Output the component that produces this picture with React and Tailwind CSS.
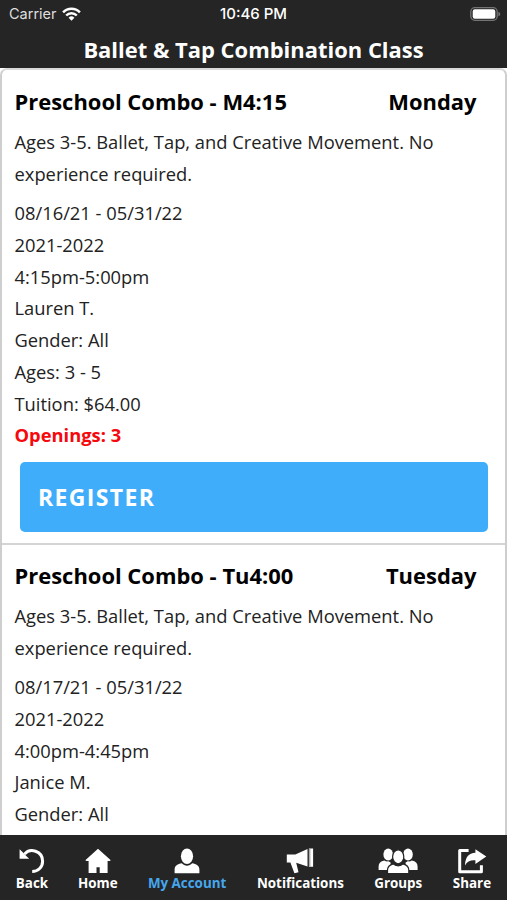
const classes = [
  {
    name: "Preschool Combo - M4:15",
    day: "Monday",
    details: ["08/16/21 - 05/31/22", "2021-2022", "4:15pm-5:00pm", "Lauren T.", "Gender: All", "Ages: 3 - 5", "Tuition: $64.00"],
    openings: 3,
  },
  {
    name: "Preschool Combo - Tu4:00",
    day: "Tuesday",
    details: ["08/17/21 - 05/31/22", "2021-2022", "4:00pm-4:45pm", "Janice M.", "Gender: All"],
  },
];

function Wifi() {
  return (
    <svg className="ml-[5px] h-[14px] w-[19px]" viewBox="0 0 19 14" fill="none" stroke="#fff" strokeWidth="2.5">
      <path d="M1.1 5.3a11.8 11.8 0 0 1 16.8 0" />
      <path d="M4.2 8.5a7.4 7.4 0 0 1 10.6 0" />
      <path d="M9.5 13.7 6.6 10.8a4.1 4.1 0 0 1 5.8 0Z" fill="#fff" stroke="none" />
    </svg>
  );
}

function Battery() {
  return (
    <svg className="h-[14px] w-[31px]" viewBox="0 0 31 14" fill="none">
      <rect x=".8" y=".7" width="26.4" height="12.6" rx="4" stroke="#747474" strokeWidth="1.3" />
      <rect x="2.7" y="2.3" width="22.6" height="9.4" rx="2.2" fill="#fff" />
      <path d="M28.4 4.7c2.4.8 2.4 3.8 0 4.6Z" fill="#747474" />
    </svg>
  );
}

function Back() {
  return (
    <svg className="h-[26px] w-[26px]" viewBox="0 0 26 26">
      <path d="M5.5 6.2C10.8-.6 23.6 2.8 23.6 13.2c0 5.8-4.3 10.2-10.4 10.3" fill="none" stroke="#fff" strokeWidth="3" />
      <path d="M.6 1.2v9.5h9.6L7.3 7.9 3.5 4.1Z" fill="#fff" />
    </svg>
  );
}

function Home() {
  return (
    <svg className="h-[26px] w-[26px]" viewBox="0 0 26 26" fill="#fff">
      <path d="M13 .8.3 12.2l1.3.9h2v12h7.9v-5.8h3.2v5.8h7.9v-12h2l1.2-.9Z" />
    </svg>
  );
}

function Account() {
  return (
    <svg className="h-[26px] w-[26px]" viewBox="0 0 26 26" fill="#fff">
      <ellipse cx="13" cy="8.3" rx="6.1" ry="7.7" />
      <path d="M7.8 15.3C3.8 16.1.6 17.7.6 21.8v3.4h24.8v-3.4c0-4.1-3.2-5.7-7.2-6.5-2.7 3.1-7.7 3.1-10.4 0Z" />
    </svg>
  );
}

function Megaphone() {
  return (
    <svg className="h-[26px] w-[28px]" viewBox="0 0 28 26" fill="#fff">
      <path d="M.8 6.4h8.5L21.5 1v17.5l-11.3-3.7 2.3 9.4-4.1 1-4-10.7H.8Z" />
      <path d="M22.9.6h4.2v18.2h-4.2Z" />
      <path d="M23.8 1v17.4" stroke="#555" strokeWidth=".7" />
    </svg>
  );
}

function Groups() {
  return (
    <svg className="h-[26px] w-[40px]" viewBox="0 0 40 26" fill="#fff">
      <ellipse cx="10.2" cy="6.6" rx="4.8" ry="6" />
      <ellipse cx="30" cy="6.6" rx="4.8" ry="6" />
      <path d="M6.3 12.5C2.6 13.4.6 15.2.6 18.4V22h12v-7.5l-2.2-1.2c-1.4.3-2.8 0-4.1-.8Z" />
      <path d="M33.9 12.5c3.7.9 5.7 2.7 5.7 5.9V22h-12v-7.5l2.2-1.2c1.4.3 2.8 0 4.1-.8Z" />
      <g stroke="#252525" strokeWidth="1.2">
        <ellipse cx="20.2" cy="8.8" rx="5.6" ry="7" />
        <path d="M15.2 15.9c-3.5 1-5.7 2.4-5.7 6.1v3.7h21.3V22c0-3.7-2.2-5.1-5.7-6.1-2.7 2.5-7.2 2.5-9.9 0Z" />
      </g>
    </svg>
  );
}

function Share() {
  return (
    <svg className="h-[26px] w-[30px]" viewBox="0 0 30 26">
      <path d="M11.6 2.5H2.7v21.3h21.7v-6.6" fill="none" stroke="#fff" strokeWidth="3" strokeLinejoin="round" />
      <path d="M18.4 1.2v3.6C11.7 5.1 8.3 9.2 8 17.5c2.2-4.2 5.5-5.6 10.4-5.2v3.8l10.9-7.6Z" fill="#fff" />
    </svg>
  );
}

const tabs = [
  { label: "Back", Icon: Back, width: "w-[32px]" },
  { label: "Home", Icon: Home, width: "w-[39px]" },
  { label: "My Account", Icon: Account, width: "w-[79px]", active: true },
  { label: "Notifications", Icon: Megaphone, width: "w-[87px]" },
  { label: "Groups", Icon: Groups, width: "w-[48px]" },
  { label: "Share", Icon: Share, width: "w-[39px]" },
];

function ClassItem({ item }) {
  return (
    <article className="shrink-0 border-b-2 border-[#d4d4d4] px-[12.5px] pt-[16px] pb-[11px] text-[18.33px] leading-[31.75px] text-[#222] first:pt-[17px]">
      <div className="flex justify-between pr-[16px] text-[21.95px] leading-[30px] font-bold text-black">
        <h2>{item.name}</h2>
        <span>{item.day}</span>
      </div>
      <p className="mt-[9px] whitespace-nowrap">
        Ages 3-5. Ballet, Tap, and Creative Movement. No
        <br />
        experience required.
      </p>
      <ul className="mt-[7.5px] whitespace-nowrap">
        {item.details.map((line) => (
          <li key={line}>{line}</li>
        ))}
      </ul>
      {item.openings && (
        <>
          <p className="font-bold text-[#f5090d]">Openings: {item.openings}</p>
          <button className="mt-[11px] ml-[5.5px] block h-[70px] w-[468px] rounded-[5px] bg-[#40adfb] pt-[2px] pl-[18px] text-left text-[23px] font-bold tracking-[1.35px] text-white">
            REGISTER
          </button>
        </>
      )}
    </article>
  );
}

export default function App() {
  return (
    <div className="flex h-[900px] w-[507px] flex-col overflow-hidden bg-white font-['Open_Sans',sans-serif]">
      <header className="h-[68px] shrink-0 bg-[#252525] text-white">
        <div className="grid h-[28px] grid-cols-[1fr_auto_1fr] items-center pr-[6px] pl-[9px] font-['Inter',sans-serif] text-[14.5px]">
          <div className="flex items-center text-[#dedede]">
            Carrier
            <Wifi />
          </div>
          <time className="mr-[3px] text-[15px] font-medium">10:46 PM</time>
          <div className="flex justify-end">
            <Battery />
          </div>
        </div>
        <h1 className="mt-[7px] text-center text-[21.95px] leading-[30px] font-bold whitespace-nowrap">Ballet &amp; Tap Combination Class</h1>
      </header>
      <main className="flex min-h-0 flex-1 flex-col overflow-hidden rounded-t-[7px] border-x-2 border-t-2 border-x-[#cecece] border-t-[#dadada]">
        {classes.map((item) => (
          <ClassItem key={item.name} item={item} />
        ))}
      </main>
      <nav className="flex h-[65px] shrink-0 justify-between bg-[#252525] pt-[12.5px] pr-[15.5px] pl-[16px] text-[13.4px] leading-[18px] font-bold text-white">
        {tabs.map(({ label, Icon, width, active }) => (
          <div key={label} className={`flex flex-col items-center whitespace-nowrap ${width}`}>
            <Icon />
            <span className={active ? "text-[#46a7ed]" : ""}>{label}</span>
          </div>
        ))}
      </nav>
    </div>
  );
}
